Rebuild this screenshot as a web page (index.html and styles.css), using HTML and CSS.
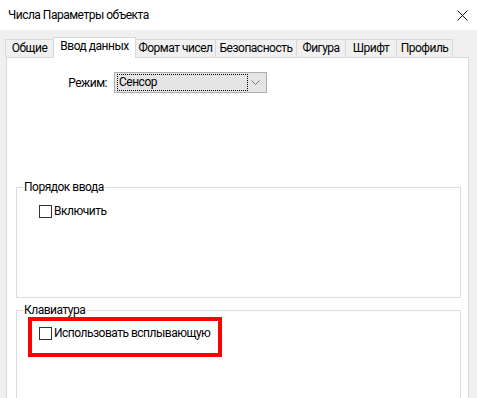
FILE: index.html
```html
<!DOCTYPE html>
<html lang="ru">
  <head>
    <meta charset="UTF-8" />
    <title>Числа Параметры объекта</title>
    <link rel="stylesheet" href="styles.css">
  </head>
  <body>
    <div class="titlebar">
      <span class="title">Числа Параметры объекта</span>
      <svg class="close" width="11" height="11" viewBox="0 0 11 11">
        <path d="M0.5 0.5L10.5 10.5M10.5 0.5L0.5 10.5" stroke="#111" stroke-width="1" fill="none" />
      </svg>
    </div>
    <div class="dialog">
      <div class="tabs">
        <div class="tab tab-general">Общие</div>
        <div class="tab tab-input active">Ввод данных</div>
        <div class="tab tab-format">Формат чисел</div>
        <div class="tab tab-security">Безопасность</div>
        <div class="tab tab-shape">Фигура</div>
        <div class="tab tab-font">Шрифт</div>
        <div class="tab tab-profile">Профиль</div>
      </div>
      <div class="panel">
        <div class="mode-row">
          <span class="mode-label">Режим:</span>
          <div class="select">
            <span class="select-value">Сенсор</span>
            <svg class="chevron" width="9" height="5" viewBox="0 0 9 5">
              <path d="M0.5 0.5L4.5 4.5L8.5 0.5" stroke="#777" stroke-width="1" fill="none" />
            </svg>
          </div>
        </div>
        <fieldset class="group group-order">
          <legend>Порядок ввода</legend>
          <label class="check"><span class="box"></span>Включить</label>
        </fieldset>
        <fieldset class="group group-keys">
          <legend>Клавиатура</legend>
          <div class="highlight">
            <label class="check"><span class="box"></span>Использовать всплывающую</label>
          </div>
        </fieldset>
      </div>
    </div>
  </body>
</html>
```

FILE: styles.css
```css
* {
  margin: 0;
  padding: 0;
  box-sizing: border-box;
  font-family: Roboto, "Liberation Sans", sans-serif;
}
body {
  background-color: #f0f0f0;
  font-size: 12px;
  letter-spacing: -0.5px;
  color: #000;
  overflow: hidden;
}
.titlebar {
  height: 30px;
  background-color: #fff;
  display: flex;
  align-items: center;
  justify-content: space-between;
  padding: 0 9px 0 8px;
}
.dialog {
  padding: 7px 8px 0 6px;
}
.tabs {
  display: flex;
  align-items: flex-end;
  height: 20px;
  margin-left: -1px;
}
.tab {
  height: 18px;
  line-height: 17px;
  text-align: center;
  border: 1px solid #d9d9d9;
  border-bottom: none;
  margin-left: -1px;
  background-color: #f0f0f0;
  white-space: nowrap;
}
.tab:first-child {
  margin-left: 0;
}
.tab.active {
  height: 21px;
  line-height: 17px;
  background-color: #fff;
  margin-bottom: -1px;
  position: relative;
  z-index: 1;
}
.tab-general { width: 49px; }
.tab-input { width: 83px; }
.tab-format { width: 81px; }
.tab-security { width: 82px; }
.tab-shape { width: 50px; }
.tab-font { width: 52px; }
.tab-profile { width: 57px; }
.panel {
  background-color: #fff;
  border: 1px solid #d9d9d9;
  height: 360px;
  padding: 14px 7px 0 9px;
}
.mode-row {
  display: flex;
  align-items: center;
  height: 21px;
}
.mode-label {
  width: 98px;
  text-align: right;
  padding-right: 7px;
}
.select {
  width: 153px;
  height: 21px;
  background-color: #e5e5e5;
  border: 1px solid #adadad;
  display: flex;
  align-items: center;
  padding: 1px 6px 1px 2px;
  justify-content: space-between;
}
.select-value {
  display: block;
  width: 131px;
  height: 17px;
  line-height: 15px;
  border: 1px dotted #000;
  padding-left: 1px;
}
.group {
  border: 1px solid #dcdcdc;
  padding: 0 6px;
  height: 118px;
}
.group legend {
  line-height: 14px;
  padding: 0 1px;
  color: #000;
}
.group-order {
  margin-top: 87px;
}
.group-order .check {
  margin: 10px 0 0 16px;
}
.group-keys {
  margin-top: 5px;
  height: 120px;
}
.check {
  display: flex;
  align-items: center;
  line-height: 15px;
  white-space: nowrap;
}
.box {
  flex-shrink: 0;
  width: 13px;
  height: 13px;
  border: 1px solid #333;
  background-color: #fff;
  margin-right: 2px;
}
.highlight {
  width: 194px;
  height: 40px;
  margin-left: 5px;
  border: 4px solid #ff0000;
  padding: 5px 0 0 7px;
}
```
